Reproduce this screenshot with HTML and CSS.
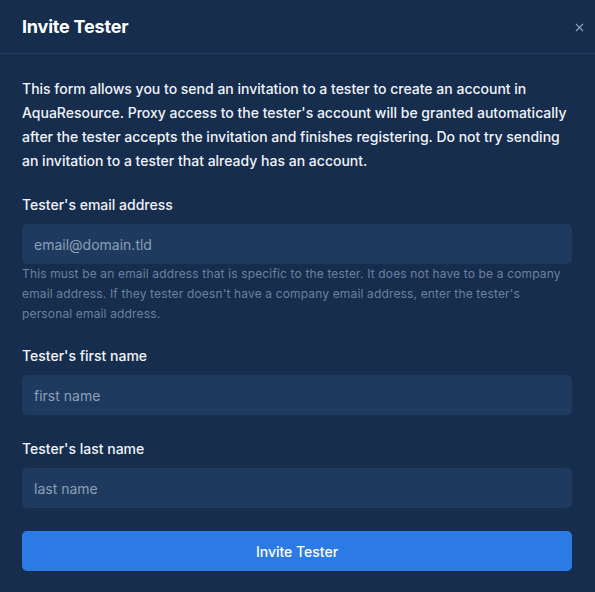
FILE: index.html
```html
<!DOCTYPE html>
<html lang="en">
<head>
<meta charset="utf-8">
<title>Invite Tester</title>
<link rel="stylesheet" href="styles.css">
</head>
<body>
<div class="modal">
  <header class="modal-header">
    <h1 class="modal-title">Invite Tester</h1>
    <button class="close" aria-label="Close">
      <svg width="9" height="9" viewBox="0 0 9 9"><path d="M1 1L8 8M8 1L1 8" stroke="#8fa3bd" stroke-width="1.1" fill="none"/></svg>
    </button>
  </header>
  <div class="modal-body">
    <p class="intro">This form allows you to send an invitation to a tester to create an account in AquaResource. Proxy access to the tester's account will be granted automatically after the tester accepts the invitation and finishes registering. Do not try sending an invitation to a tester that already has an account.</p>
    <div class="field field-with-help">
      <label class="label" for="email">Tester's email address</label>
      <input class="input" id="email" type="text" placeholder="email@domain.tld">
      <p class="help">This must be an email address that is specific to the tester. It does not have to be a company email address. If they tester doesn't have a company email address, enter the tester's personal email address.</p>
    </div>
    <div class="field">
      <label class="label" for="first">Tester's first name</label>
      <input class="input" id="first" type="text" placeholder="first name">
    </div>
    <div class="field field-last">
      <label class="label" for="last">Tester's last name</label>
      <input class="input" id="last" type="text" placeholder="last name">
    </div>
    <button class="submit">Invite Tester</button>
  </div>
</div>
</body>
</html>
```

FILE: styles.css
```css
html, body {
  margin: 0;
  padding: 0;
  background: #162d4d;
}
body {
  font-family: "Inter", "Liberation Sans", sans-serif;
  color: #f1f4f8;
}
.modal {
  width: 595px;
  height: 592px;
  background: #162d4d;
}
.modal-header {
  height: 53px;
  border-bottom: 1px solid #1f3c60;
  display: flex;
  align-items: center;
  justify-content: space-between;
  padding: 0 10px 0 22px;
}
.modal-title {
  margin: 0;
  font-size: 18px;
  font-weight: 700;
  color: #ffffff;
  letter-spacing: -0.2px;
}
.close {
  background: none;
  border: 0;
  padding: 0;
  width: 12px;
  height: 12px;
  display: flex;
  align-items: center;
  justify-content: center;
  margin-top: 2px;
}
.modal-body {
  padding: 23px 23px 0 22px;
}
.intro {
  margin: 0 0 22px;
  font-size: 14px;
  font-weight: 500;
  line-height: 24px;
  color: #f1f4f8;
}
.field {
  margin-bottom: 24px;
}
.field-with-help {
  margin-bottom: 22px;
}
.field-last {
  margin-bottom: 23px;
}
.label {
  display: block;
  font-size: 14px;
  font-weight: 500;
  line-height: 20px;
  color: #f1f4f8;
  margin-bottom: 9px;
}
.input {
  display: block;
  box-sizing: border-box;
  width: 100%;
  height: 40px;
  border: 0;
  border-radius: 5px;
  background: #1e3a5e;
  padding: 0 12px;
  font-family: inherit;
  font-size: 14px;
  color: #f1f4f8;
  outline: none;
}
.input::placeholder {
  color: #8d9fb8;
}
.help {
  margin: 0;
  font-size: 12px;
  line-height: 20px;
  letter-spacing: 0.15px;
  color: #6c819e;
}
.submit {
  display: block;
  width: 100%;
  height: 40px;
  border: 0;
  border-radius: 5px;
  background: #2c7be5;
  color: #ffffff;
  font-family: inherit;
  font-size: 14px;
  font-weight: 500;
  margin-top: 0;
}
```
